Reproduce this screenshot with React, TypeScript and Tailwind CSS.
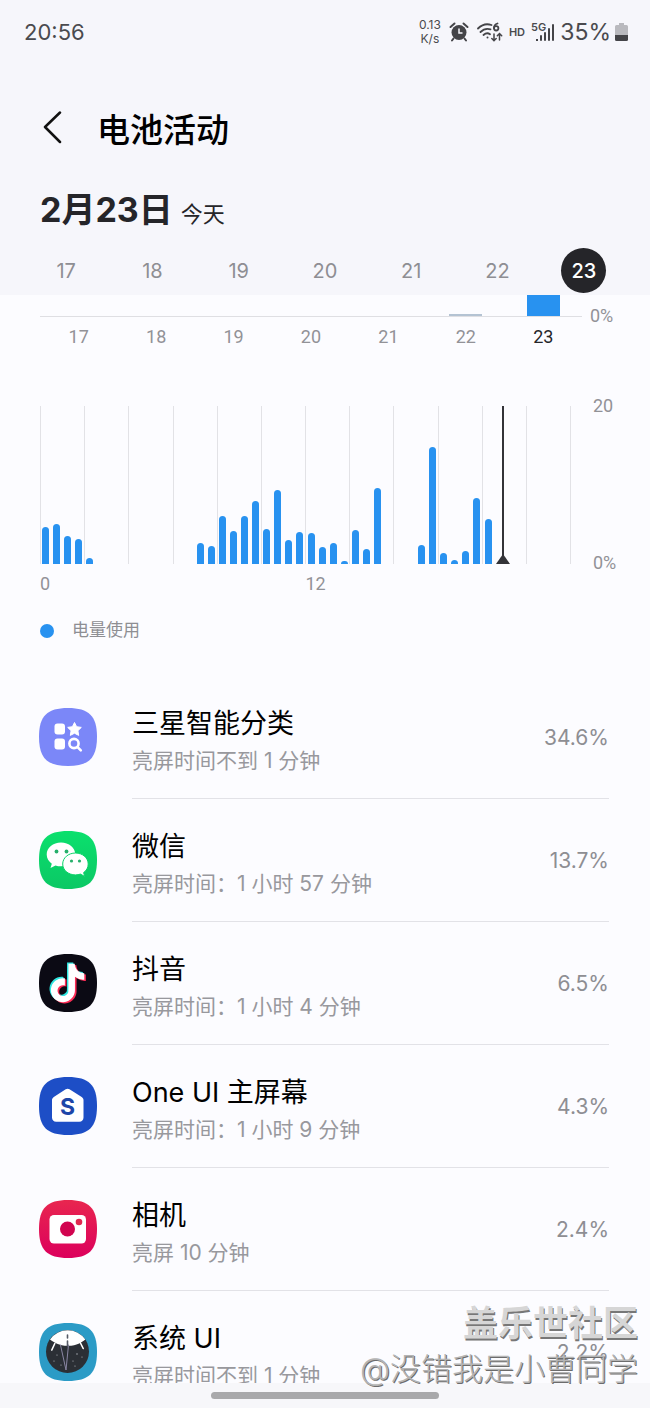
import { ReactNode, useState } from "react";
import clsx from "clsx";

const days = [17, 18, 19, 20, 21, 22, 23];

// visible part of each day's bar, in px
const dayBars = [0, 0, 0, 0, 0, 2, 22];

// battery use per half hour, in px above the axis
const usage = [
  37, 40, 28, 25, 6, 0, 0, 0, 0, 0, 0, 0,
  0, 0, 21, 18, 48, 33, 48, 63, 35, 74, 24, 32,
  31, 17, 21, 3, 34, 15, 76, 0, 0, 0, 19, 117,
  11, 4, 13, 66, 45, 0, 0, 0, 0, 0, 0, 0,
];

const SQUIRCLE = "M29 0C50 0 58 8 58 29S50 58 29 58 0 50 0 29 8 0 29 0z";
const NOTE =
  "M12.525.02c1.31-.02 2.61-.01 3.91-.02.08 1.53.63 3.09 1.75 4.17 1.12 1.11 2.7 1.62 4.24 1.79v4.03c-1.44-.05-2.89-.35-4.2-.97-.57-.26-1.1-.59-1.62-.93-.01 2.92.01 5.84-.02 8.75-.08 1.4-.54 2.79-1.35 3.94-1.31 1.92-3.58 3.17-5.91 3.21-1.43.08-2.86-.31-4.08-1.03-2.02-1.19-3.44-3.37-3.65-5.71-.02-.5-.03-1-.01-1.49.18-1.9 1.12-3.72 2.58-4.96 1.66-1.44 3.98-2.13 6.15-1.72.02 1.48-.04 2.96-.04 4.44-.99-.32-2.15-.23-3.02.37-.63.41-1.11 1.04-1.36 1.75-.21.51-.15 1.07-.14 1.61.24 1.64 1.82 3.02 3.5 2.87 1.12-.01 2.19-.66 2.77-1.61.19-.33.4-.67.41-1.06.1-1.79.06-3.57.07-5.36.01-4.03-.01-8.05.02-12.07z";

function AppIcon({ fill, children }: { fill: string; children: ReactNode }) {
  return (
    <svg viewBox="0 0 58 58" className="size-[58px] shrink-0" aria-hidden="true">
      <path d={SQUIRCLE} fill={fill} />
      {children}
    </svg>
  );
}

const SmartIcon = () => (
  <AppIcon fill="#7b87f8">
    <g fill="#fff">
      <rect x="15.5" y="15.5" width="10.5" height="11" rx="3" />
      <rect x="15.5" y="30.5" width="10.5" height="11" rx="3" />
      <path
        d="M35.5 14.5l2.1 4.2 4.7.7-3.4 3.3.8 4.7-4.2-2.2-4.2 2.2.8-4.7-3.4-3.3 4.7-.7z"
        stroke="#fff"
        strokeWidth="1"
        strokeLinejoin="round"
      />
    </g>
    <g fill="none" stroke="#fff" strokeWidth="2.6" strokeLinecap="round">
      <circle cx="35" cy="35.5" r="4.6" />
      <path d="M38.6 39.2l3.2 3.2" />
    </g>
  </AppIcon>
);

const WechatIcon = () => (
  <AppIcon fill="url(#wechat)">
    <defs>
      <linearGradient id="wechat" x1="0" y1="0" x2="0" y2="1">
        <stop offset="0" stopColor="#0be06d" />
        <stop offset="1" stopColor="#0bc865" />
      </linearGradient>
    </defs>
    <path d="M22 11.5c-8 0-14.3 5.2-14.3 12 0 3.7 2 7 5.1 9.2l-1.3 4.3 5-2.6c1.7.6 3.5.9 5.5.9 8 0 14.3-5.1 14.3-11.8S30 11.5 22 11.5z" fill="#fff" />
    <path
      d="M36.5 22c-7.2 0-12.8 4.9-12.8 11s5.6 10.9 12.8 10.9c1.8 0 3.4-.3 4.9-.8l4.3 2.3-1.1-3.8c2.9-2 4.6-5.1 4.6-8.6 0-6.1-5.6-11-12.7-11z"
      fill="#fff"
      stroke="#0bd469"
      strokeWidth="1"
    />
    <g fill="#27b06b">
      <circle cx="17.5" cy="20.5" r="1.9" />
      <circle cx="27.5" cy="20.5" r="1.9" />
      <circle cx="32.5" cy="30" r="1.6" />
      <circle cx="40.5" cy="30" r="1.6" />
    </g>
  </AppIcon>
);

const DouyinIcon = () => (
  <AppIcon fill="#0b0a14">
    <path d={NOTE} fill="#2ee6e0" transform="translate(8 8.5) scale(1.6)" />
    <path d={NOTE} fill="#fb2c55" transform="translate(11 11) scale(1.6)" />
    <path d={NOTE} fill="#fff" transform="translate(9.4 9.8) scale(1.6)" />
  </AppIcon>
);

const HomeIcon = () => (
  <AppIcon fill="#1d4ec6">
    <path
      d="M26.7 12.3a3.5 3.5 0 0 1 3.8 0l12.2 7.6c1.2.8 1.8 1.8 1.8 3.2v17.4c0 2.5-1.7 4.2-4.2 4.2H17.2c-2.5 0-4.2-1.7-4.2-4.2V23.1c0-1.4.6-2.4 1.8-3.2z"
      fill="#fff"
    />
    <text x="28.5" y="38" textAnchor="middle" fontSize="23" fontWeight="700" fill="#1d46a8">
      S
    </text>
  </AppIcon>
);

const CameraIcon = () => (
  <AppIcon fill="url(#camera)">
    <defs>
      <linearGradient id="camera" x1="0" y1="0" x2="0" y2="1">
        <stop offset="0" stopColor="#e8264f" />
        <stop offset="1" stopColor="#dc005c" />
      </linearGradient>
    </defs>
    <rect x="10.5" y="15" width="36.5" height="28.5" rx="4.5" fill="#fff" />
    <circle cx="28.5" cy="29" r="7.5" fill="#d1044f" />
    <circle cx="40" cy="22" r="3.3" fill="#e0274f" />
  </AppIcon>
);

const SystemIcon = () => (
  <AppIcon fill="#2b9bc6">
    <circle cx="28.5" cy="28.5" r="21.5" fill="#2b2f35" />
    <path d="M11 16.5a21.5 21.5 0 0 1 35.3 0C42 19.5 38.5 22.8 29 22.8S15.5 19.5 11 16.5z" fill="#fff" />
    <g fill="none" strokeLinecap="round">
      <path d="M15.8 20.5l-3 6.5M41.2 19.5l3 6" stroke="#fff" strokeWidth="1.6" />
      <path d="M21.5 22l5.5 25 2.5-25" stroke="#8a86a3" strokeWidth="1" />
      <path d="M28.5 12v3M28.5 18v5" stroke="#555a66" strokeWidth="1.6" />
    </g>
    <g fill="#b9bcc4">
      <circle cx="18" cy="32" r=".6" />
      <circle cx="15" cy="38" r=".6" />
      <circle cx="38" cy="31" r=".7" />
      <circle cx="43" cy="34" r=".6" />
      <circle cx="34" cy="38" r=".6" />
      <circle cx="36" cy="43" r=".6" />
      <circle cx="22" cy="42" r=".6" />
    </g>
  </AppIcon>
);

const apps = [
  { name: "三星智能分类", time: "亮屏时间不到 1 分钟", percent: "34.6%", icon: <SmartIcon /> },
  { name: "微信", time: "亮屏时间：1 小时 57 分钟", percent: "13.7%", icon: <WechatIcon /> },
  { name: "抖音", time: "亮屏时间：1 小时 4 分钟", percent: "6.5%", icon: <DouyinIcon /> },
  { name: "One UI 主屏幕", time: "亮屏时间：1 小时 9 分钟", percent: "4.3%", icon: <HomeIcon /> },
  { name: "相机", time: "亮屏 10 分钟", percent: "2.4%", icon: <CameraIcon /> },
  { name: "系统 UI", time: "亮屏时间不到 1 分钟", percent: "2.2%", icon: <SystemIcon /> },
];

function StatusBar() {
  return (
    <div className="flex h-16 items-center justify-between pr-[22px] pl-6 text-[#4a4a4e]">
      <span className="text-[22px]">20:56</span>
      <div className="flex items-center">
        <div className="mr-2 text-center text-xs leading-[14px]">
          <div>0.13</div>
          <div>K/s</div>
        </div>
        <svg viewBox="0 0 20 20" className="mr-2 size-5" aria-hidden="true">
          <circle cx="10" cy="10.5" r="7.5" fill="#444448" />
          <path d="M1.5 5l4-3.5M18.5 5l-4-3.5M4.5 16.5L3 18.5M15.5 16.5l1.5 2" stroke="#444448" strokeWidth="2" strokeLinecap="round" />
          <path d="M10 6.5v4.5h3.5" stroke="#f6f6fb" strokeWidth="1.5" fill="none" />
        </svg>
        <svg viewBox="0 0 26 22" className="mr-1.5 h-[22px] w-[26px]" fill="none" stroke="#444448" strokeWidth="1.8" strokeLinecap="round" aria-hidden="true">
          <path d="M1 7.5C5 3.5 10 2.5 14.5 4M3.5 11c3-3 6.5-3.8 10-2.7M6.5 14c2-1.8 4.5-2.2 6.5-.8" />
          <circle cx="10.5" cy="16.5" r="1" fill="#444448" stroke="none" />
          <path d="M20.5 2.5c-2.5.8-3.5 2.5-3.5 4.7" />
          <circle cx="19.2" cy="7.3" r="2.2" />
          <path d="M17 13v6.5M14.8 17.5l2.2 2.2 2.2-2.2M22.5 19v-6.5M20.3 14.7l2.2-2.2 2.2 2.2" strokeWidth="1.5" />
        </svg>
        <span className="mr-1.5 text-[11px] font-semibold">HD</span>
        <div className="flex items-end">
          <span className="self-start text-[11px] leading-[10px] font-semibold">5G</span>
          <svg viewBox="0 0 18 20" className="-ml-2.5 h-5 w-[18px]" fill="#444448" aria-hidden="true">
            <rect x="0" y="17" width="2" height="2" />
            <rect x="4" y="13" width="2" height="6" rx="1" />
            <rect x="8" y="10" width="2" height="9" rx="1" />
            <rect x="12" y="6" width="2" height="13" rx="1" />
            <rect x="16" y="2" width="2" height="17" rx="1" />
          </svg>
        </div>
        <span className="mr-1 ml-1.5 text-[23px]">35%</span>
        <svg viewBox="0 0 13 18" className="h-[18px] w-[13px]" aria-hidden="true">
          <path d="M4 0h5v2h2.5A1.5 1.5 0 0 1 13 3.5V12H0V3.5A1.5 1.5 0 0 1 1.5 2H4z" fill="#b9b9be" />
          <path d="M0 12h13v4.5a1.5 1.5 0 0 1-1.5 1.5h-10A1.5 1.5 0 0 1 0 16.5z" fill="#444448" />
        </svg>
      </div>
    </div>
  );
}

function DayChart({ selected }: { selected: number }) {
  return (
    <section className="flex pr-6 pl-10 font-['Roboto','Noto_Sans_CJK_SC',sans-serif] text-lg text-[#929297]">
      <div className="flex-1">
        <div className="flex h-[22px] items-end border-b border-[#dfdfe3]">
          {dayBars.map((height, i) => (
            <div key={days[i]} className="flex flex-1 justify-center">
              <div className={clsx("w-[33px]", days[i] === selected ? "bg-[#2892f0]" : "bg-[#b4c3d3]")} style={{ height }} />
            </div>
          ))}
        </div>
        <div className="flex pt-1.5">
          {days.map((day) => (
            <span key={day} className={clsx("flex-1 text-center", day === selected && "text-[#252529]")}>
              {day}
            </span>
          ))}
        </div>
      </div>
      <span className="w-11 pt-[7px] pl-2">0%</span>
    </section>
  );
}

function HourChart() {
  return (
    <section className="mt-[55px] flex pr-6 pl-10 font-['Roboto','Noto_Sans_CJK_SC',sans-serif] text-lg text-[#929297]">
      <div className="flex-1">
        <div className="relative h-[158px]">
          <div className="grid h-full grid-cols-12 border-r border-[#e2e2e6]">
            {Array.from({ length: 12 }, (_, i) => (
              <div key={i} className="border-l border-[#e2e2e6]" />
            ))}
          </div>
          <div className="absolute inset-0 flex items-end">
            {usage.map((height, i) => (
              <div key={i} className="flex flex-1 justify-center">
                <div className="w-[7px] rounded-t-full bg-[#2892f0]" style={{ height }} />
              </div>
            ))}
          </div>
          {/* current time */}
          <div className="absolute inset-y-0 left-[87%] flex w-0.5 justify-center bg-[#333338]">
            <svg viewBox="0 0 14 10" className="h-2.5 w-3.5 shrink-0 self-end" aria-hidden="true">
              <path d="M7 0l7 10H0z" fill="#333338" />
            </svg>
          </div>
        </div>
        <div className="grid grid-cols-2 pt-1.5">
          <span>0</span>
          <span>12</span>
        </div>
      </div>
      <div className="-mt-3.5 flex h-[185px] w-[55px] flex-col justify-between pl-[22px]">
        <span>20</span>
        <span>0%</span>
      </div>
    </section>
  );
}

function App() {
  const [selected, setSelected] = useState(23);

  return (
    <div className="relative flex h-screen flex-col overflow-hidden bg-[#fcfcff] font-['Inter','Noto_Sans_CJK_SC',sans-serif]">
      <header className="h-[295px] shrink-0 bg-[#f6f6fb]">
        <StatusBar />
        <div className="mt-10 flex h-12 items-center pl-[42px]">
          <button type="button" aria-label="返回" className="mr-[35px]">
            <svg viewBox="0 0 20 34" className="h-[34px] w-5" fill="none" stroke="#111" strokeWidth="2.5" strokeLinecap="round" strokeLinejoin="round">
              <path d="M18 1.5L3 16l15 15" />
            </svg>
          </button>
          <h1 className="pt-1.5 text-[33px] font-medium text-black">电池活动</h1>
        </div>
        <div className="mt-8 flex items-baseline gap-2 pl-10 leading-[52px] text-[#252529]">
          <span className="text-[34px] font-bold">2月23日</span>
          <span className="text-[22px]">今天</span>
        </div>
        <div className="mt-2 flex px-[23px]">
          {days.map((day) => (
            <div key={day} className="flex flex-1 justify-center">
              <button
                type="button"
                onClick={() => setSelected(day)}
                className={clsx(
                  "size-[45px] rounded-full text-xl",
                  day === selected ? "bg-[#252529] font-medium text-white" : "text-[#8e8e93]",
                )}
              >
                {day}
              </button>
            </div>
          ))}
        </div>
      </header>

      <main className="min-h-0 flex-1 overflow-hidden">
        <DayChart selected={selected} />
        <HourChart />
        <div className="mt-5 flex items-center gap-[18px] pl-10 text-[17px] text-[#8e8e93]">
          <span className="size-3.5 rounded-full bg-[#2892f0]" />
          电量使用
        </div>
        <ul className="mt-8">
          {apps.map((app) => (
            <li key={app.name} className="flex h-[123px] items-center gap-[35px] pr-[41px] pl-[39px]">
              {app.icon}
              <div className="flex h-full flex-1 items-center justify-between border-b border-[#e2e2e7]">
                <div className="pt-2.5">
                  <div className="text-[27px] leading-[38px] text-black">{app.name}</div>
                  <div className="text-[21px] leading-9 text-[#98989d]">{app.time}</div>
                </div>
                <span className="pt-0.5 text-[21px] text-[#8e8e93]">{app.percent}</span>
              </div>
            </li>
          ))}
        </ul>
      </main>

      <div className="flex h-[25px] shrink-0 items-center justify-center bg-[#f7f7fa]">
        <div className="h-[7px] w-[35%] rounded-full bg-[#a9a9ab]" />
      </div>

      <div className="pointer-events-none absolute right-3 bottom-4 text-right whitespace-nowrap">
        <div className="text-[35px] leading-[46px] font-bold text-[#d6d6d6] [text-shadow:1px_2px_0_#777]">盖乐世社区</div>
        <div className="text-[31px] leading-[46px] font-light text-[#b4b4b4] [text-shadow:1px_1px_0_#6c6c6c]">@没错我是小曹同学</div>
      </div>
    </div>
  );
}

export default App;
